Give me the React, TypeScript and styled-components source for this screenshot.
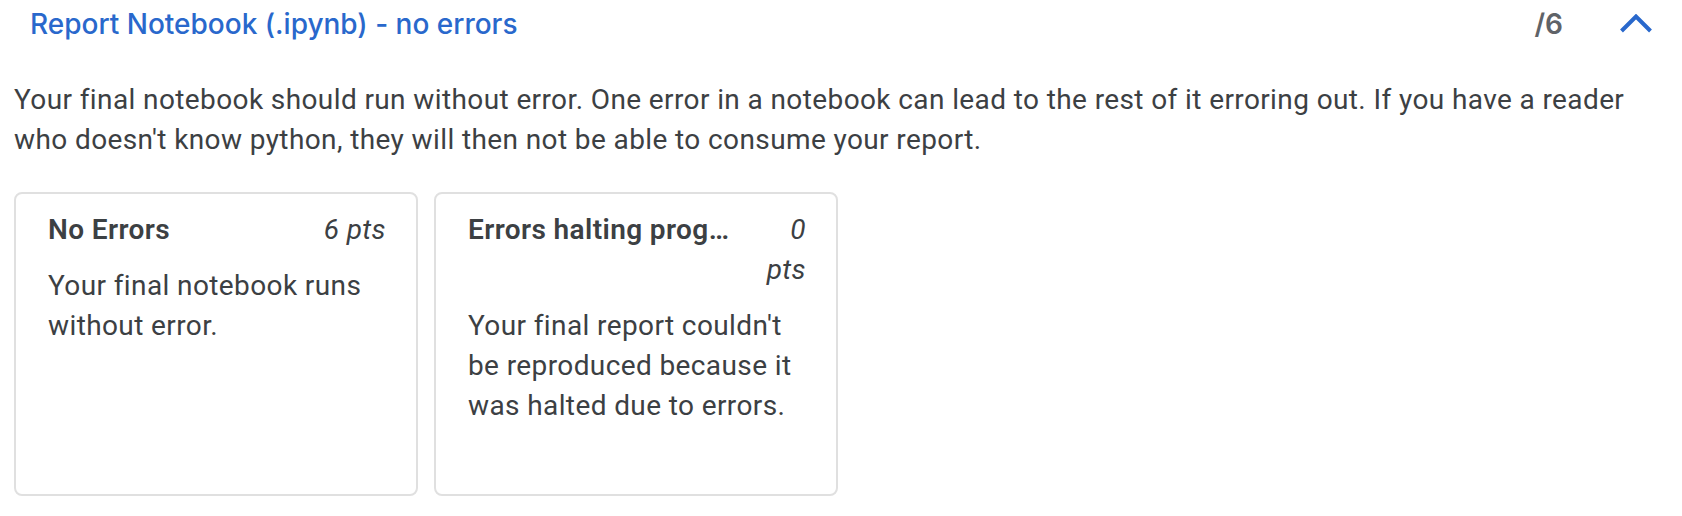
import React from "react";
import styled, { createGlobalStyle } from "styled-components";

const GlobalStyle = createGlobalStyle`
  * { box-sizing: border-box; }
  body {
    margin: 0;
    background: #fff;
    color: #3c4043;
    font: 400 28px/40px Roboto, sans-serif;
    letter-spacing: 0.014em;
  }
  h2, h3, p { margin: 0; font: inherit; }
`;

const Criterion = styled.section`
  padding: 0 14px 20px;
`;

const Header = styled.header`
  display: flex;
  align-items: center;
  height: 48px;
  padding: 0 15px 0 16px;
  letter-spacing: normal;
`;

const Title = styled.h2`
  flex: 1;
  color: #2968cc;
  && { font: 500 28px/40px "Google Sans", Inter, sans-serif; }
`;

const Total = styled.span`
  color: #5f6368;
  font: 600 28px/40px "Google Sans", Inter, sans-serif;
`;

const Toggle = styled.button`
  display: flex;
  margin-left: 56px;
  padding: 0;
  border: 0;
  background: none;
  cursor: pointer;
`;

const Description = styled.p`
  margin-top: 32px;
`;

const Levels = styled.div`
  display: flex;
  gap: 16px;
  margin-top: 32px;
`;

const Level = styled.article`
  width: 404px;
  min-height: 304px;
  padding: 16px 30px 16px 32px;
  border: 2px solid #e0e0e0;
  border-radius: 8px;
`;

const LevelHead = styled.div`
  display: flex;
  align-items: flex-start;
  justify-content: space-between;
  gap: 16px;
  margin-bottom: 16px;
`;

const LevelName = styled.h3`
  && { font-weight: 600; }
  flex-shrink: 0;
  max-width: 264px;
  overflow: hidden;
  text-overflow: ellipsis;
  white-space: nowrap;
`;

const Points = styled.span`
  font-style: italic;
  text-align: right;
`;

const levels = [
  { name: "No Errors", points: "6 pts", text: "Your final notebook runs without error." },
  { name: "Errors halting program", points: "0 pts", text: "Your final report couldn't be reproduced because it was halted due to errors." },
];

export default function App() {
  return (
    <Criterion>
      <GlobalStyle />
      <Header>
        <Title>Report Notebook (.ipynb) - no errors</Title>
        <Total>/6</Total>
        <Toggle type="button" aria-label="Collapse criterion" aria-expanded="true">
          <svg width="34" height="20" viewBox="0 0 34 20" fill="none" stroke="#2968cc" strokeWidth="4">
            <path d="M2.500 17 17 2.500 31.500 17" />
          </svg>
        </Toggle>
      </Header>
      <Description>
        Your final notebook should run without error. One error in a notebook can lead to the rest of it erroring out. If you have a reader who doesn't know python, they will then not be able to consume your report.
      </Description>
      <Levels>
        {levels.map((level) => (
          <Level key={level.name}>
            <LevelHead>
              <LevelName>{level.name}</LevelName>
              <Points>{level.points}</Points>
            </LevelHead>
            <p>{level.text}</p>
          </Level>
        ))}
      </Levels>
    </Criterion>
  );
}
